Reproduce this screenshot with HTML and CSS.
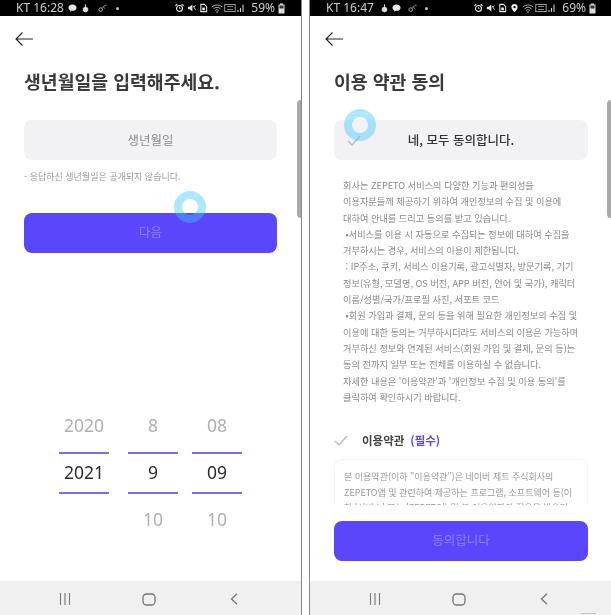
FILE: index.html
```html
<!DOCTYPE html>
<html lang="ko">
<head>
<meta charset="utf-8">
<title>ZEPETO</title>
<link rel="stylesheet" href="styles.css">
</head>
<body>
<svg class="defs" width="0" height="0" aria-hidden="true">
  <defs>
    <symbol id="bubble" viewBox="0 0 10 10"><path d="M5 1C2.3 1 .5 2.6.5 4.6c0 1.3.8 2.4 2 3l-.3 1.7 2-1.2H5c2.700 0 4.500-1.500 4.500-3.500S7.700 1 5 1z" fill="#e8e8e8"/></symbol>
    <symbol id="hand" viewBox="0 0 10 10"><path d="M5 .8v3M2.500 5.200 5 3.600l2.500 1.600v3L5 9.400 2.500 8.200z" fill="#ddd" stroke="#ddd"/></symbol>
    <symbol id="key" viewBox="0 0 10 10"><circle cx="3" cy="6.800" r="2" fill="none" stroke="#bbb"/><path d="M4.400 5.400 8 2h1.500M6 4l1.500 1.500" fill="none" stroke="#bbb" stroke-width=".9"/></symbol>
    <symbol id="alarm" viewBox="0 0 10 10"><circle cx="5" cy="5.500" r="3.300" fill="none" stroke="#e5e5e5" stroke-width="1.300"/><path d="M.5 2.500 2.500.8M9.500 2.500 7.500.8" stroke="#e5e5e5" stroke-width="1.200"/><path d="M5 3.600v2h1.400" stroke="#e5e5e5" fill="none" stroke-width=".8"/></symbol>
    <symbol id="mute" viewBox="0 0 10 10"><path d="M1 3.500h2L6 1v8L3 6.500H1z" fill="#e5e5e5"/><path d="M7 3l2.500 4M9.500 2 7.500 4" stroke="#e5e5e5"/></symbol>
    <symbol id="sim" viewBox="0 0 10 10"><path d="M2 1h4l2.500 2.500V9H2z" fill="none" stroke="#e5e5e5" stroke-width="1.200"/><rect x="3.600" y="4.500" width="3" height="3" fill="#e5e5e5"/></symbol>
    <symbol id="pin" viewBox="0 0 10 10"><path d="M5 .5a3.500 3.500 0 0 0-3.500 3.500C1.500 6.500 5 9.800 5 9.800S8.500 6.500 8.500 4A3.500 3.500 0 0 0 5 .5z" fill="#eee"/><circle cx="5" cy="4" r="1.300" fill="#000"/></symbol>
    <symbol id="wifi" viewBox="0 0 12 10"><path d="M.8 4a7.500 7.500 0 0 1 10.400 0M2.500 5.800a5 5 0 0 1 7 0M4.200 7.500a2.500 2.500 0 0 1 3.600 0" fill="none" stroke="#aaa" stroke-width="1"/><circle cx="6" cy="9" r=".8" fill="#ccc"/></symbol>
    <symbol id="volte" viewBox="0 0 12 10"><rect x=".7" y="1.500" width="10.500" height="7" fill="none" stroke="#999"/><path d="M3 3.500h6M3 6.500h6" stroke="#888"/></symbol>
    <symbol id="bars" viewBox="0 0 8 10"><path d="M1 9V7M3.500 9V5M6 9V1.500" stroke="#ccc" stroke-width="1.100"/></symbol>
    <symbol id="battery" viewBox="0 0 7 11"><path d="M2 .5h3v1h1.500v9H.5v-9H2z" fill="#ddd"/><rect x="1.500" y="2.500" width="4" height="3" fill="#333"/></symbol>
    <symbol id="back" viewBox="0 0 18 16"><path d="M18 8H1M7.500 1.500 1 8l6.500 6.500" fill="none" stroke="#222" stroke-width="1.100"/></symbol>
    <symbol id="check" viewBox="0 0 14 11"><path d="M1 6l4 4 8-9" fill="none" stroke="#bdbdc2" stroke-width="1.500"/></symbol>
    <symbol id="nav-menu" viewBox="0 0 12 12"><path d="M1.500 0v12M6 0v12M10.500 0v12" stroke="#777" stroke-width="1.100"/></symbol>
    <symbol id="nav-home" viewBox="0 0 14 13"><rect x="1" y="1" width="12" height="11" rx="3.500" fill="none" stroke="#777" stroke-width="1.300"/></symbol>
    <symbol id="nav-back" viewBox="0 0 8 12"><path d="M7 .8 1.500 6 7 11.200" fill="none" stroke="#777" stroke-width="1.300"/></symbol>
  </defs>
</svg>

<main class="stage">
  <section class="phone phone-left">
    <header class="status">
      <span class="carrier">KT 16:28</span>
      <svg class="ic ic-a"><use href="#bubble"/></svg>
      <svg class="ic ic-b"><use href="#hand"/></svg>
      <svg class="ic ic-c"><use href="#key"/></svg>
      <span class="dot"></span>
      <span class="status-right">
        <svg class="ic"><use href="#alarm"/></svg>
        <svg class="ic"><use href="#mute"/></svg>
        <svg class="ic"><use href="#sim"/></svg>
        <svg class="ic-w"><use href="#wifi"/></svg>
        <svg class="ic-w"><use href="#volte"/></svg>
        <svg class="ic-s"><use href="#bars"/></svg>
        <span class="pct">59%</span>
        <svg class="ic-b2"><use href="#battery"/></svg>
      </span>
    </header>
    <div class="content">
      <svg class="back"><use href="#back"/></svg>
      <h1 class="title">생년월일을 입력해주세요.</h1>
      <div class="field">생년월일</div>
      <p class="note">- 응답하신 생년월일은 공개되지 않습니다.</p>
      <button class="cta" type="button">다음</button>
      <div class="picker">
        <div class="col col-year">
          <span class="cell">2020</span>
          <span class="cell cell-on">2021</span>
          <span class="cell"></span>
        </div>
        <div class="col col-month">
          <span class="cell">8</span>
          <span class="cell cell-on">9</span>
          <span class="cell">10</span>
        </div>
        <div class="col col-day">
          <span class="cell">08</span>
          <span class="cell cell-on">09</span>
          <span class="cell">10</span>
        </div>
      </div>
    </div>
    <nav class="navbar">
      <svg class="nav-a"><use href="#nav-menu"/></svg>
      <svg class="nav-b"><use href="#nav-home"/></svg>
      <svg class="nav-c"><use href="#nav-back"/></svg>
    </nav>
    <span class="scrollbar"></span>
    <span class="touch touch-left"></span>
  </section>

  <section class="phone phone-right">
    <header class="status">
      <span class="carrier">KT 16:47</span>
      <svg class="ic ic-a2"><use href="#hand"/></svg>
      <svg class="ic ic-b2x"><use href="#bubble"/></svg>
      <svg class="ic ic-c2"><use href="#key"/></svg>
      <span class="dot dot2"></span>
      <span class="status-right">
        <svg class="ic"><use href="#alarm"/></svg>
        <svg class="ic"><use href="#mute"/></svg>
        <svg class="ic"><use href="#sim"/></svg>
        <svg class="ic"><use href="#pin"/></svg>
        <svg class="ic-w"><use href="#wifi"/></svg>
        <svg class="ic-w"><use href="#volte"/></svg>
        <svg class="ic-s"><use href="#bars"/></svg>
        <span class="pct">69%</span>
        <svg class="ic-b2"><use href="#battery"/></svg>
      </span>
    </header>
    <div class="content">
      <svg class="back"><use href="#back"/></svg>
      <h1 class="title">이용 약관 동의</h1>
      <div class="agree-all">
        <svg class="check check-all"><use href="#check"/></svg>
        <span class="agree-label">네, 모두 동의합니다.</span>
      </div>
      <p class="terms">회사는 ZEPETO 서비스의 다양한 기능과 편의성을<br>이용자분들께 제공하기 위하여 개인정보의 수집 및 이용에<br>대하여 안내를 드리고 동의를 받고 있습니다.<br>&nbsp;•서비스를 이용 시 자동으로 수집되는 정보에 대하여 수집을<br>거부하시는 경우, 서비스의 이용이 제한됩니다.<br>&nbsp;: IP주소, 쿠키, 서비스 이용기록, 광고식별자, 방문기록, 기기<br>정보(유형, 모델명, OS 버전, APP 버전, 언어 및 국가), 캐릭터<br>이름/성별/국가/프로필 사진, 서포트 코드<br>&nbsp;•회원 가입과 결제, 문의 등을 위해 필요한 개인정보의 수집 및<br>이용에 대한 동의는 거부하시더라도 서비스의 이용은 가능하며<br>거부하신 정보와 연계된 서비스(회원 가입 및 결제, 문의 등)는<br>동의 전까지 일부 또는 전체를 이용하실 수 없습니다.<br>자세한 내용은 '이용약관'과 '개인정보 수집 및 이용 동의'를<br>클릭하여 확인하시기 바랍니다.</p>
      <div class="required">
        <svg class="check"><use href="#check"/></svg>
        <span class="req-name">이용약관</span>
        <span class="req-tag">(필수)</span>
      </div>
      <div class="terms-box">
        <p class="terms-box-text">본 이용약관(이하 "이용약관")은 네이버 제트 주식회사의<br>ZEPETO앱 및 관련하여 제공하는 프로그램, 소프트웨어 등(이<br>하 '서비스' 또는 'ZEPETO') 및 본 이용약관의 적용을 받으며</p>
      </div>
      <button class="cta cta-agree" type="button">동의합니다</button>
    </div>
    <nav class="navbar">
      <svg class="nav-a"><use href="#nav-menu"/></svg>
      <svg class="nav-b"><use href="#nav-home"/></svg>
      <svg class="nav-c"><use href="#nav-back"/></svg>
    </nav>
    <span class="scrollbar"></span>
    <span class="touch touch-right"></span>
    <span class="ghost"></span>
  </section>
</main>
</body>
</html>
```

FILE: styles.css
```css
* { box-sizing: border-box; }

html, body {
  margin: 0;
  height: 100%;
  background: #fff;
  overflow: hidden;
}

body {
  font-family: "Noto Sans CJK KR", "Noto Sans", sans-serif;
  filter: blur(0.35px);
}

.defs { position: absolute; }

.stage {
  display: flex;
  justify-content: space-between;
  height: 615px;
  width: 611px;
}

.phone {
  position: relative;
  display: flex;
  flex-direction: column;
  height: 615px;
  background: #fff;
}

.phone-left {
  width: 302px;
  border-right: 1px solid #888;
}

.phone-right {
  width: 302px;
  border-left: 1px solid #888;
}

/* Status bar */
.status {
  position: absolute;
  top: 0;
  left: 0;
  right: 0;
  height: 16px;
  background: #000;
  color: #ccc;
  display: flex;
  align-items: center;
  padding: 0 16px;
  font-family: "Noto Sans", sans-serif;
  font-size: 12px;
  line-height: 14px;
  z-index: 1;
}

.status .carrier { width: 46px; white-space: nowrap; }
.ic { width: 9px; height: 10px; flex: none; }
.ic-a { margin-left: 6px; }
.ic-b { margin-left: 4px; }
.ic-c { margin-left: 8px; }
.ic-a2 { margin-left: 8px; }
.ic-b2x { margin-left: 3px; }
.ic-c2 { margin-left: 7px; }

.dot {
  width: 3px;
  height: 3px;
  border-radius: 50%;
  background: #ccc;
  margin-left: 9px;
}
.dot2 { margin-left: 8px; }

.status-right {
  margin-left: auto;
  display: flex;
  align-items: center;
  gap: 3px;
}

.ic-w { width: 12px; height: 10px; flex: none; margin-right: -2px; }
.ic-s { width: 8px; height: 10px; flex: none; }
.pct { margin-left: 3px; white-space: nowrap; }
.ic-b2 { width: 7px; height: 11px; flex: none; }

.phone-right .status { padding: 0 15px 0 16px; }

/* Content column */
.content {
  display: flex;
  flex-direction: column;
  flex: 1;
  padding: 31px 24px 0;
}

.phone-right .content { padding-right: 23px; }

.back {
  display: block;
  width: 18px;
  height: 16px;
  margin-left: -9px;
}

.title {
  margin: 19px 0 1px;
  font-size: 18.3px;
  line-height: 30px;
  font-weight: 700;
  color: #3a3a3a;
  white-space: nowrap;
}

.field {
  margin-top: 23px;
  height: 40px;
  padding-bottom: 2px;
  border-radius: 8px;
  background: #f2f2f5;
  color: #8b8b90;
  font-size: 12.5px;
  display: flex;
  align-items: center;
  justify-content: center;
}

.note {
  margin: 10px 0 0;
  font-size: 9px;
  line-height: 14px;
  color: #9a9a9a;
}

.cta {
  display: block;
  width: 100%;
  height: 40px;
  margin-top: 29px;
  border: 0;
  padding: 0 0 3px;
  border-radius: 8px;
  background: #5a47fb;
  color: #8f83fb;
  font-family: inherit;
  font-size: 12.5px;
}

/* Date picker */
.picker {
  display: flex;
  margin: 146px 0 0 35px;
}

.col {
  display: flex;
  flex-direction: column;
  width: 50px;
  font-family: "Noto Sans", sans-serif;
  font-size: 17.5px;
  color: #b0b0b0;
}

.col-month { margin-left: 19px; }
.col-day { margin-left: 14px; }

.cell {
  display: flex;
  align-items: center;
  justify-content: center;
  height: 54px;
  padding-bottom: 2px;
}

.cell-on {
  height: 42px;
  margin: -1px 0;
  color: #2b2b2b;
  border-top: 2px solid #7a6ee8;
  border-bottom: 2px solid #7a6ee8;
}

/* Navigation bar */
.navbar {
  position: relative;
  flex: none;
  height: 34px;
  background: #f0f0f0;
}

.navbar svg { position: absolute; top: 12px; }
.nav-a { left: 59px; width: 12px; height: 12px; }
.nav-b { left: 142px; width: 14px; height: 13px; }
.nav-c { left: 230px; width: 8px; height: 12px; }

.scrollbar {
  position: absolute;
  top: 100px;
  right: 0;
  width: 4px;
  height: 118px;
  border-radius: 4px 0 0 4px;
  background: #a9a9a9;
}

.touch {
  position: absolute;
  width: 32px;
  height: 32px;
  border: 8.5px solid rgba(60, 200, 255, 0.42);
  border-radius: 50%;
}

.touch-left { left: 174px; top: 191px; }
.touch-right { left: 34px; top: 109px; }

.ghost {
  position: absolute;
  left: 271px;
  bottom: 1px;
  width: 15px;
  height: 1px;
  background: #c4c4c4;
}

/* Terms screen */
.agree-all {
  position: relative;
  margin-top: 23px;
  height: 40px;
  padding-bottom: 2px;
  border-radius: 8px;
  background: #f2f2f5;
  display: flex;
  align-items: center;
  justify-content: center;
}

.agree-label {
  font-size: 12.5px;
  font-weight: 500;
  color: #333;
}

.check {
  display: block;
  flex: none;
  width: 14px;
  height: 11px;
}

.check-all {
  position: absolute;
  left: 13px;
  top: 15px;
}

.terms {
  margin: 17px 0 0 9px;
  font-size: 9.2px;
  line-height: 16.3px;
  color: #888;
  white-space: nowrap;
}

.required {
  display: flex;
  align-items: center;
  height: 20px;
  margin-top: 25px;
}

.req-name {
  margin-left: 14px;
  font-size: 11.5px;
  font-weight: 700;
  color: #444;
}

.req-tag {
  margin-left: 6px;
  font-size: 11.5px;
  font-weight: 700;
  color: #5a47fb;
}

.terms-box {
  margin-top: 9px;
  height: 46px;
  overflow: hidden;
  border: 1px solid #f4f4f4;
  border-bottom: 0;
  border-radius: 8px 8px 0 0;
  padding: 9px 9px 0;
}

.terms-box-text {
  margin: 0;
  font-size: 9px;
  line-height: 15.5px;
  color: #999;
  white-space: nowrap;
}

.cta-agree { margin-top: 16px; }
```
